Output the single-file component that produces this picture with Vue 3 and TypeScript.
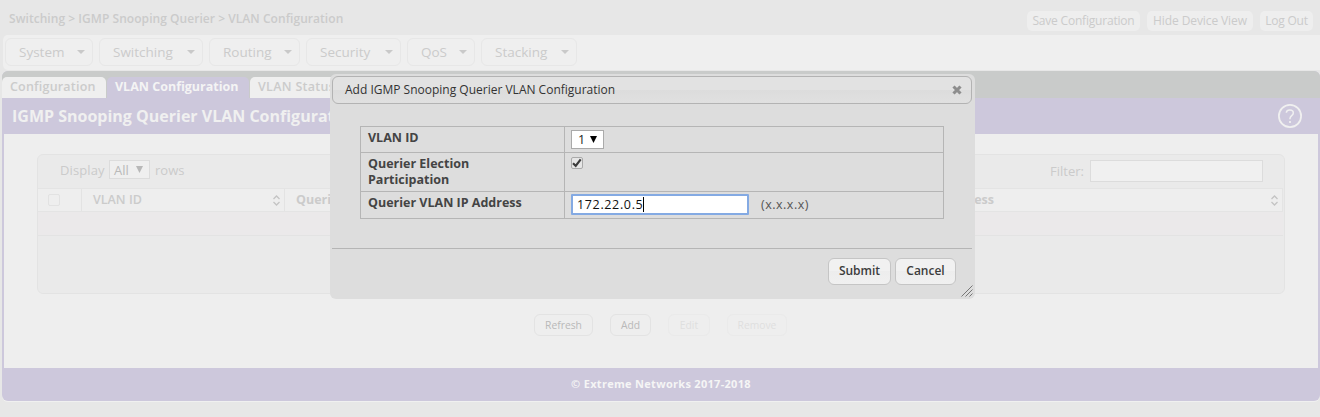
<script setup lang="ts">
import { ref } from 'vue'

interface MenuItem { label: string; cls: string }

const menu: MenuItem[] = [
  { label: 'System', cls: 'm-system' },
  { label: 'Switching', cls: 'm-switching' },
  { label: 'Routing', cls: 'm-routing' },
  { label: 'Security', cls: 'm-security' },
  { label: 'QoS', cls: 'm-qos' },
  { label: 'Stacking', cls: 'm-stacking' },
]
const address = ref('172.22.0.5')
</script>

<template>
  <div class="page">
    <header class="top">
      <div class="crumbs">Switching &gt; IGMP Snooping Querier &gt; VLAN Configuration</div>
      <div class="top-actions">
        <span class="pill save">Save Configuration</span>
        <span class="pill hide">Hide Device View</span>
        <span class="pill logout">Log Out</span>
      </div>
    </header>

    <nav class="menu">
      <div v-for="m in menu" :key="m.label" class="menu-item" :class="m.cls">
        <span>{{ m.label }}</span>
        <svg width="8" height="4" viewBox="0 0 8 4"><path d="M0 0H8L4 4Z" fill="#c9c9c9" /></svg>
      </div>
    </nav>

    <main class="panel">
      <div class="tabs">
        <div class="tab t-conf"><span>Configuration</span></div>
        <div class="tab t-vlan active"><span>VLAN Configuration</span></div>
        <div class="tab t-status"><span>VLAN Status</span></div>
      </div>
      <div class="title-bar">
        <h1>IGMP Snooping Querier VLAN Configuration</h1>
        <svg class="help" width="26" height="26" viewBox="0 0 26 26" fill="none" stroke="#f0f0f0">
          <circle cx="13" cy="13" r="11.1" stroke-width="1.8" />
          <path d="M9.3 9.8C9.5 7.8 11 7 12.8 7c2.100 0 3.500 1.200 3.500 2.900 0 2.600-3.300 2.900-3.300 5.600v.7" stroke-width="1.5" />
          <path d="M13 18v2" stroke-width="1.7" />
        </svg>
      </div>
      <div class="body">
        <div class="grid">
          <div class="toolbar">
            <span class="display">Display</span>
            <div class="all"><span>All</span><svg width="7" height="7" viewBox="0 0 7 7"><path d="M0 0H7L3.500 7Z" fill="#b8b8b8" /></svg></div>
            <span class="rows">rows</span>
            <span class="filter">Filter:</span>
            <div class="filter-box"></div>
          </div>
          <div class="head">
            <div class="h-check"><i class="box"></i></div>
            <div class="h-vlan"><span>VLAN ID</span>
              <svg width="7" height="11" viewBox="0 0 7 11" fill="none" stroke="#c4c4c4" stroke-width="1.300"><path d="M.5 4L3.500 1L6.500 4M.5 7L3.500 10L6.500 7" /></svg>
            </div>
            <div class="h-rest"><span>Querier Election</span><span class="addr">Address</span>
              <svg width="7" height="11" viewBox="0 0 7 11" fill="none" stroke="#c4c4c4" stroke-width="1.300"><path d="M.5 4L3.500 1L6.500 4M.5 7L3.500 10L6.500 7" /></svg>
            </div>
          </div>
          <div class="empty"></div>
          <div class="tail"></div>
        </div>
        <div class="buttons">
          <span class="btn b-refresh">Refresh</span>
          <span class="btn b-add">Add</span>
          <span class="btn b-edit off">Edit</span>
          <span class="btn b-remove off">Remove</span>
        </div>
      </div>
      <footer><span>© Extreme Networks 2017-2018</span></footer>
    </main>

    <section class="dialog">
      <div class="dlg-title">
        <span>Add IGMP Snooping Querier VLAN Configuration</span>
        <svg width="10" height="10" viewBox="0 0 10 10"><path d="M1.500 1.500L8.500 8.500M8.500 1.500L1.500 8.500" stroke="#8d8d8d" stroke-width="3.100" /></svg>
      </div>
      <div class="form">
        <div class="row r1">
          <div class="label l1"><span>VLAN ID</span></div>
          <div class="field"><div class="select"><span>1</span><svg width="7" height="7" viewBox="0 0 7 7"><path d="M0 0H7L3.500 7Z" fill="#000" /></svg></div></div>
        </div>
        <div class="row r2">
          <div class="label l2"><span class="qe">Querier Election</span><br><span class="pa">Participation</span></div>
          <div class="field">
            <div class="check"><svg width="10" height="10" viewBox="0 0 10 10" fill="none" stroke="#3c3c3c" stroke-width="2.200"><path d="M1 5.300L3.700 7.800L8.700 1.300" /></svg></div>
          </div>
        </div>
        <div class="row r3">
          <div class="label l3"><span>Querier VLAN IP Address</span></div>
          <div class="field"><div class="input"><span>{{ address }}</span><i class="caret"></i></div><span class="hint">(x.x.x.x)</span></div>
        </div>
      </div>
      <div class="dlg-foot">
        <span class="dbtn submit">Submit</span>
        <span class="dbtn cancel">Cancel</span>
      </div>
      <svg class="grip" width="12" height="12" viewBox="0 0 12 12" stroke="#777" stroke-width="1"><path d="M.5 11.500L11.500 .5M4.500 11.500L11.500 4.500M8.500 11.500L11.500 8.500" /></svg>
    </section>
  </div>
</template>

<style>
body { margin: 0; background: #e7e7e7; }
</style>

<style scoped>
.page { position: relative; width: 1320px; height: 417px; overflow: hidden; background: #e7e7e7; font-family: "Open Sans", "Noto Sans", sans-serif; color: #cbcbcb; white-space: nowrap; }
.page * { box-sizing: border-box; }
svg { display: block; flex: none; }
.top { height: 35px; display: flex; justify-content: space-between; padding-right: 7px; }
.crumbs { padding: 10px 0 0 9px; font-size: 12px; font-weight: 600; line-height: 18px; letter-spacing: 0.05px; }
.top-actions { display: flex; gap: 7px; padding-top: 11px; }
.pill { height: 20px; border-radius: 5px; background: #eee; font-size: 12px; font-weight: 500; line-height: 20px; text-align: center; }
.save { width: 113px; letter-spacing: -0.2px; } .hide { width: 106px; letter-spacing: -0.1px; } .logout { width: 53px; letter-spacing: -0.25px; }
.menu { height: 35px; margin-left: 3px; padding: 3px 2px; display: flex; gap: 6px; border-radius: 5px 0 0 5px; background: #efefef; }
.menu-item { height: 28px; border: 1px solid #e7e7e7; border-radius: 6px; display: flex; align-items: center; justify-content: space-between; padding: 0 7px 0 13px; font-size: 13.500px; font-weight: 500; }
.m-system { width: 88px; } .m-switching { width: 104px; } .m-routing { width: 91px; } .m-security { width: 95px; } .m-qos { width: 68px; } .m-stacking { width: 96px; }
.panel { margin: 1px 0 0 2px; width: 1318px; height: 330px; border-radius: 6px; overflow: hidden; background: #cdc8dc; box-shadow: 0 1px #f0f0f0; }
.tabs { height: 27px; padding-top: 6px; display: flex; gap: 1px; background: #c9cbca; }
.tab { height: 21px; border-radius: 5px 5px 0 0; background: #efefef; padding-left: 8px; font-size: 12.500px; font-weight: 600; line-height: 20px; }
.tab.active { background: #cdc8dc; color: #f4f4f4; font-weight: 700; }
.t-conf { width: 104px; letter-spacing: 0.2px; } .t-vlan { width: 142px; } .t-status { width: 100px; letter-spacing: 0.3px; }
.title-bar { height: 36px; display: flex; align-items: center; justify-content: space-between; padding: 0 17px 0 10px; }
h1 { margin: 0; font-size: 16px; font-weight: 700; color: #f0f0f0; line-height: 34px; }
.body { height: 234px; margin: 0 2px; padding: 20px 33px 0; background: #eee; }
.grid { width: 1248px; height: 140px; border: 1px solid #e3e3e3; border-radius: 6px; background: #eaeaea; overflow: hidden; }
.toolbar { height: 33px; display: flex; align-items: flex-start; padding: 5px 21px 0 22px; font-size: 13px; line-height: 20px; }
.display { width: 49px; letter-spacing: .1px; }
.all { width: 41px; height: 19px; border: 1px solid #dcdcdc; background: #efefef; color: #b9b9b9; display: flex; align-items: center; justify-content: space-between; padding: 0 6px 0 4px; }
.rows { margin-left: 5px; }
.filter { margin-left: auto; width: 40px; padding-top: 1px; }
.filter-box { width: 173px; height: 22px; border: 1px solid #dcdcdc; background: #f0f0f0; }
.head { height: 24px; margin-right: 1px; border: solid #e4e4e4; border-width: 1px 1px 1px 0; display: flex; background: #eee; font-size: 12.500px; font-weight: 600; line-height: 22px; }
.head > div { display: flex; align-items: center; }
.h-check { width: 44px; border-right: 1px solid #e3e3e3; padding-left: 10px; }
.box { width: 12px; height: 12px; border: 1px solid #e2e2e2; border-radius: 2px; }
.h-vlan { width: 203px; border-right: 1px solid #e3e3e3; padding: 0 4px 0 11px; justify-content: space-between; }
.h-rest { flex: 1; padding: 0 4px 0 11px; font-weight: 700; }
.addr { width: 60px; margin-left: auto; margin-right: 277px; text-align: right; }
.empty { height: 24px; margin-right: 1px; background: #ebe9ea; border-bottom: 1px solid #e3e3e3; }
.buttons { display: flex; padding: 20px 0 0 497px; gap: 17px; }
.btn { height: 22px; border: 1px solid #e3e3e3; border-radius: 6px; text-align: center; font-size: 10.300px; font-weight: 500; line-height: 21px; color: #b9b9b9; }
.off { color: #dfdfdf; border-color: #eaeaea; }
.b-refresh { width: 59px; } .b-add { width: 41px; } .b-edit { width: 42px; } .b-remove { width: 60px; }
footer { height: 33px; text-align: center; font-size: 11px; line-height: 32px; font-weight: 700; color: #f5f5f5; letter-spacing: .3px; }
.dialog { position: absolute; left: 330px; top: 74px; width: 645px; height: 225px; padding: 2px 3px 0 2px; border-radius: 6px; background: #ddd; color: #444; }
.dlg-title { height: 28px; border: 1px solid #b3b3b3; border-radius: 6px; background: linear-gradient(#e2e2e2 50%, #dcdcdc 50%, #e0e0e0); display: flex; align-items: center; justify-content: space-between; padding: 0 9px 0 12px; font-size: 12px; line-height: 24px; font-weight: 500; color: #333; }
.form { width: 584px; margin: 22px 0 0 28px; border: 1px solid #b5b5b5; font-size: 12.500px; }
.row { display: flex; } .row + .row { border-top: 1px solid #b5b5b5; }
.r1 { height: 25px; } .r2 { height: 39px; } .r3 { height: 27px; }
.label { width: 204px; border-right: 1px solid #b5b5b5; padding: 3px 0 0 7px; font-weight: 700; line-height: 16px; }
.field { display: flex; padding-left: 6px; }
.select { width: 33px; height: 19px; margin-top: 3px; border: 1px solid #aaa; background: #fff; color: #222; display: flex; align-items: center; justify-content: space-between; padding: 0 6px; }
.check { width: 12px; height: 12px; margin-top: 4px; border: 1px solid #aaa; border-radius: 2px; background: #e6e6e6; }
.input { width: 178px; height: 21px; margin-top: 2px; border: 2px solid #84aae3; border-radius: 1px; background: #fff; display: flex; align-items: center; padding-left: 4px; color: #111; letter-spacing: .65px; }
.caret { width: 1px; height: 15px; background: #000; }
.hint { margin-left: 12px; line-height: 26px; letter-spacing: .5px; color: #555; }
.dlg-foot { margin-top: 29px; border-top: 1px solid #b5b5b5; padding: 9px 16px 0 0; display: flex; justify-content: flex-end; gap: 4px; }
.dbtn { height: 27px; border: 1px solid #c5c5c5; border-radius: 6px; background: linear-gradient(#f1f1f1 50%, #ededed 50%, #f0f0f0); font-size: 12px; font-weight: 600; line-height: 24px; text-align: center; color: #3c3c3c; }
.submit { width: 63px; } .cancel { width: 61px; }
.grip { position: absolute; right: 2px; bottom: 2px; }
</style>
